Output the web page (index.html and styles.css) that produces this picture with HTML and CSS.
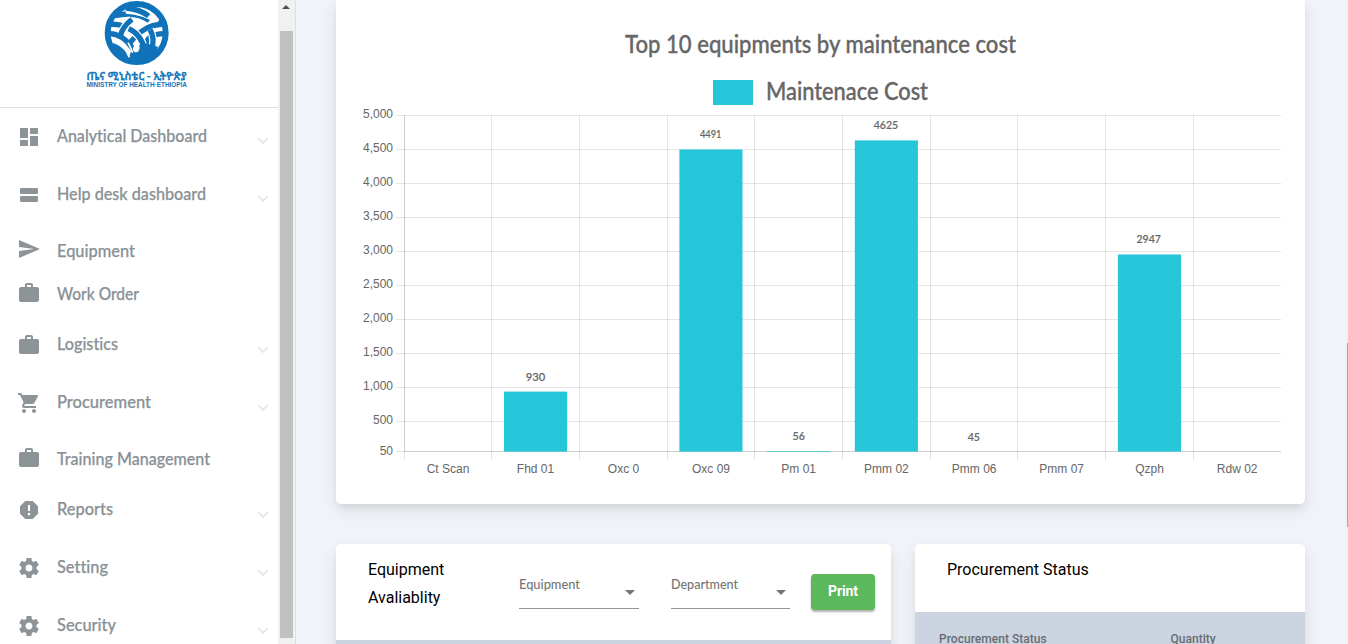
FILE: index.html
```html
<!DOCTYPE html>
<html lang="en">
<head>
<meta charset="utf-8">
<title>Analytical Dashboard</title>
<link rel="stylesheet" href="styles.css">
</head>
<body>
<svg class="sprite" aria-hidden="true">
  <symbol id="dash" viewBox="0 0 24 24"><path d="M3 13h8V3H3v10zm0 8h8v-6H3v6zm10 0h8V11h-8v10zm0-18v6h8V3h-8z"/></symbol>
  <symbol id="agenda" viewBox="0 0 24 24"><rect x="3" y="5" width="18" height="6" rx="1.2"/><rect x="3" y="13" width="18" height="6" rx="1.2"/></symbol>
  <symbol id="send" viewBox="0 0 24 24"><path d="M2.01 21L23 12 2.01 3 2 10l15 2-15 2z"/></symbol>
  <symbol id="work" viewBox="0 0 24 24"><path d="M20 6h-4V4c0-1.11-.89-2-2-2h-4c-1.11 0-2 .89-2 2v2H4c-1.11 0-1.99.89-1.99 2L2 19c0 1.11.89 2 2 2h16c1.11 0 2-.89 2-2V8c0-1.11-.89-2-2-2zm-6 0h-4V4h4v2z"/></symbol>
  <symbol id="cart" viewBox="0 0 24 24"><path d="M7 18c-1.1 0-1.99.9-1.99 2S5.900 22 7 22s2-.9 2-2-.9-2-2-2zM1 2v2h2l3.600 7.590-1.350 2.450c-.16.280-.25.610-.25.960 0 1.100.9 2 2 2h12v-2H7.420c-.14 0-.25-.11-.25-.25l.03-.12.900-1.630h7.450c.75 0 1.410-.41 1.750-1.030l3.580-6.490c.08-.14.12-.31.12-.48 0-.55-.45-1-1-1H5.210l-.94-2H1zm16 16c-1.100 0-1.990.9-1.990 2s.89 2 1.990 2 2-.9 2-2-.9-2-2-2z"/></symbol>
  <symbol id="report" viewBox="0 0 24 24"><path d="M15.730 3H8.270L3 8.270v7.460L8.270 21h7.460L21 15.730V8.270L15.730 3zM12 17.300c-.72 0-1.300-.58-1.300-1.300s.58-1.300 1.300-1.300 1.300.58 1.300 1.300-.58 1.300-1.300 1.300zm1-4.300h-2V7h2v6z"/></symbol>
  <symbol id="gear" viewBox="0 0 24 24"><path d="M19.430 12.980c.04-.32.07-.64.07-.98s-.03-.66-.07-.98l2.110-1.650c.19-.15.24-.42.12-.64l-2-3.460c-.12-.22-.39-.3-.61-.22l-2.490 1c-.52-.4-1.080-.73-1.690-.98l-.38-2.650C14.460 2.180 14.250 2 14 2h-4c-.25 0-.46.18-.49.42l-.38 2.650c-.61.25-1.170.59-1.690.98l-2.490-1c-.23-.09-.49 0-.61.22l-2 3.460c-.13.22-.07.49.12.64l2.110 1.650c-.04.32-.07.65-.07.98s.03.66.07.98l-2.110 1.650c-.19.15-.24.42-.12.64l2 3.460c.12.22.39.3.61.22l2.490-1c.52.4 1.080.73 1.690.98l.38 2.650c.03.24.24.42.49.42h4c.25 0 .46-.18.49-.42l.38-2.650c.61-.25 1.170-.59 1.690-.98l2.490 1c.23.09.49 0 .61-.22l2-3.460c.12-.22.07-.49-.12-.64l-2.110-1.650zM12 15.500c-1.930 0-3.500-1.570-3.500-3.500s1.570-3.500 3.500-3.500 3.500 1.570 3.500 3.500-1.570 3.500-3.500 3.500z"/></symbol>
  <symbol id="chev" viewBox="0 0 12 8"><path d="M1.200 1.200L6 6L10.800 1.200" fill="none" stroke="#e4e7eb" stroke-width="1.900"/></symbol>
</svg>
<div class="app">
  <aside class="sidebar">
    <div class="brand">
      <svg class="logo" viewBox="84 0 110 92">
        <g transform="scale(.33333)">
          <circle cx="410" cy="99" r="88" fill="#fff"/>
          <g class="weave">
            <path class="band" d="M325 74Q352 70 376 80M448 50Q474 56 492 78"/>
            <path class="gap" d="M345 47Q408 32 452 64Q484 86 494 112"/>
            <path class="band" d="M345 47Q408 32 448 62"/>
            <path class="gap" d="M378 30Q436 34 476 62"/>
            <path class="band" d="M378 24Q420 28 446 48"/>
            <path class="gap" d="M360 112Q366 80 396 58"/>
            <path class="band" d="M360 112Q366 80 396 58"/>
            <path class="band" d="M498 72Q455 72 428 92Q405 108 386 134"/>
            <path class="band" d="M498 101Q468 100 450 112Q440 120 434 140"/>
            <path class="gap" d="M386 86Q424 103 434 150"/>
            <path class="band" d="M386 86Q424 103 434 150"/>
            <path class="gap" d="M450 88Q466 116 454 150"/>
            <path class="band" d="M450 88Q466 116 454 150"/>
            <path class="band" d="M324 101Q366 98 400 148"/>
          </g>
          <path fill="#1073b9" d="M328 128Q360 128 388 168L398 142Q398 154 409 155Q421 154 418 134Q430 126 452 134L474 140L462 170L410 190L350 170Z"/>
          <path fill="none" stroke="#fff" stroke-width="5" d="M330 116Q370 126 388 172M384 128Q394 146 398 158"/>
          <path fill="#fff" d="M408 124Q420 141 417 148A9 9 0 0 1 399 147Q400 138 408 124Z"/>
          <circle cx="410" cy="99" r="87" fill="none" stroke="#1073b9" stroke-width="18"/>
        </g>
        <text class="amharic" x="86.500" y="80" textLength="100" lengthAdjust="spacingAndGlyphs">ጤና ሚኒስቴር - ኢትዮጵያ</text>
        <text class="ministry" x="86.500" y="87" textLength="100.500" lengthAdjust="spacingAndGlyphs">MINISTRY OF HEALTH·ETHIOPIA</text>
      </svg>
    </div>
    <nav class="menu">
      <a class="item wide"><svg class="icon"><use href="#dash"/></svg><svg class="label"><text y="18" textLength="150" lengthAdjust="spacingAndGlyphs">Analytical Dashboard</text></svg><svg class="chev"><use href="#chev"/></svg></a>
      <a class="item wide"><svg class="icon"><use href="#agenda"/></svg><svg class="label"><text y="18" textLength="149" lengthAdjust="spacingAndGlyphs">Help desk dashboard</text></svg><svg class="chev"><use href="#chev"/></svg></a>
      <a class="item"><svg class="icon raised"><use href="#send"/></svg><svg class="label"><text y="18" textLength="78" lengthAdjust="spacingAndGlyphs">Equipment</text></svg></a>
      <a class="item last"><svg class="icon"><use href="#work"/></svg><svg class="label"><text y="18" textLength="82" lengthAdjust="spacingAndGlyphs">Work Order</text></svg></a>
      <a class="item wide"><svg class="icon"><use href="#work"/></svg><svg class="label"><text y="18" textLength="61" lengthAdjust="spacingAndGlyphs">Logistics</text></svg><svg class="chev low"><use href="#chev"/></svg></a>
      <a class="item wide"><svg class="icon"><use href="#cart"/></svg><svg class="label"><text y="18" textLength="94" lengthAdjust="spacingAndGlyphs">Procurement</text></svg><svg class="chev low"><use href="#chev"/></svg></a>
      <a class="item last"><svg class="icon"><use href="#work"/></svg><svg class="label"><text y="18" textLength="153" lengthAdjust="spacingAndGlyphs">Training Management</text></svg></a>
      <a class="item wide"><svg class="icon"><use href="#report"/></svg><svg class="label"><text y="18" textLength="56" lengthAdjust="spacingAndGlyphs">Reports</text></svg><svg class="chev low"><use href="#chev"/></svg></a>
      <a class="item wide"><svg class="icon"><use href="#gear"/></svg><svg class="label"><text y="18" textLength="51" lengthAdjust="spacingAndGlyphs">Setting</text></svg><svg class="chev low"><use href="#chev"/></svg></a>
      <a class="item wide"><svg class="icon"><use href="#gear"/></svg><svg class="label"><text y="18" textLength="59" lengthAdjust="spacingAndGlyphs">Security</text></svg><svg class="chev low"><use href="#chev"/></svg></a>
    </nav>
  </aside>
  <div class="scrollbar"><i class="up"></i><i class="thumb"></i></div>
  <main class="main">
    <section class="card chart-card">
      <svg class="chart" viewBox="336 0 969 504">
        <g class="display">
          <text x="625" y="53" textLength="391" lengthAdjust="spacingAndGlyphs">Top 10 equipments by maintenance cost</text>
          <text x="766" y="100" textLength="162" lengthAdjust="spacingAndGlyphs">Maintenace Cost</text>
        </g>
        <rect class="bar" x="713" y="80" width="40" height="25"/>
        <path class="grid" d="M396 115.500H1281M396 149.500H1281M396 183.500H1281M396 217.500H1281M396 251.500H1281M396 285.500H1281M396 319.500H1281M396 353.500H1281M396 387.500H1281M396 421.500H1281M396 451.500H1281"/>
        <path class="grid" d="M404.500 115V460M491.500 115V460M579.500 115V460M667.500 115V460M754.500 115V460M842.500 115V460M930.500 115V460M1017.500 115V460M1105.500 115V460M1193.500 115V460"/>
        <path class="grid" d="M404.500 115V451M404 451.500H1281"/>
        <g class="bar">
          <rect x="504" y="391.600" width="63.100" height="60"/>
          <rect x="679.400" y="149.500" width="63.100" height="302.100"/>
          <rect x="766.800" y="451" width="63.100" height=".6"/>
          <rect x="854.800" y="140.400" width="63.100" height="311.200"/>
          <rect x="1117.900" y="254.500" width="63.100" height="197.100"/>
        </g>
        <g class="axis end">
          <text x="393" y="118">5,000</text><text x="393" y="152">4,500</text><text x="393" y="186">4,000</text><text x="393" y="220">3,500</text><text x="393" y="254">3,000</text><text x="393" y="288">2,500</text><text x="393" y="322">2,000</text><text x="393" y="356">1,500</text><text x="393" y="390">1,000</text><text x="393" y="424">500</text><text x="393" y="455">50</text>
        </g>
        <g class="axis mid">
          <text x="448" y="473">Ct Scan</text><text x="535.500" y="473">Fhd 01</text><text x="623.500" y="473">Oxc 0</text><text x="711" y="473">Oxc 09</text><text x="798.700" y="473">Pm 01</text><text x="886.400" y="473">Pmm 02</text><text x="974.200" y="473">Pmm 06</text><text x="1061.700" y="473">Pmm 07</text><text x="1149.500" y="473">Qzph</text><text x="1237.200" y="473">Rdw 02</text>
        </g>
        <g class="value">
          <text x="525.800" y="381" textLength="19.500" lengthAdjust="spacingAndGlyphs">930</text>
          <text x="700" y="138" textLength="21.500" lengthAdjust="spacingAndGlyphs">4491</text>
          <text x="792.500" y="440" textLength="12.500" lengthAdjust="spacingAndGlyphs">56</text>
          <text x="873.700" y="129" textLength="24.500" lengthAdjust="spacingAndGlyphs">4625</text>
          <text x="967.700" y="441" textLength="12.300" lengthAdjust="spacingAndGlyphs">45</text>
          <text x="1136.500" y="243" textLength="24.500" lengthAdjust="spacingAndGlyphs">2947</text>
        </g>
      </svg>
    </section>
    <div class="row">
      <section class="card equipment">
        <div class="toolbar">
          <h2 class="title narrow">Equipment Avaliablity</h2>
          <div class="select"><svg class="field"><text y="13" textLength="61" lengthAdjust="spacingAndGlyphs">Equipment</text></svg><i class="arrow"></i></div>
          <div class="select second"><svg class="field"><text y="13" textLength="67" lengthAdjust="spacingAndGlyphs">Department</text></svg><i class="arrow"></i></div>
          <button class="print">Print</button>
        </div>
        <div class="thead"></div>
      </section>
      <section class="card procurement">
        <h2 class="title">Procurement Status</h2>
        <div class="thead"><span class="col">Procurement Status</span><span>Quantity</span></div>
      </section>
    </div>
  </main>
  <div class="page-scroll"><i></i></div>
</div>
</body>
</html>
```
FILE: styles.css
```css
* { box-sizing: border-box; }
body { margin: 0; height: 644px; overflow: hidden; background: #f0f4f8; font-family: Roboto, sans-serif; }
svg { display: block; }
text { font-variant-ligatures: none; }
.sprite { display: none; }
.app { display: flex; height: 644px; overflow: hidden; }
.sidebar { width: 278px; flex: none; background: #fff; }
.brand { height: 108px; padding-left: 84px; border-bottom: 1px solid #dfe0e2; }
.logo { width: 110px; height: 92px; }
.weave { fill: none; }
.gap { stroke: #fff; stroke-width: 23px; }
.band { stroke: #1073b9; stroke-width: 16px; }
.amharic { font: 600 11px "Noto Sans Ethiopic", "Noto Sans", "DejaVu Sans", sans-serif; fill: #1073b9; stroke: #1073b9; stroke-width: .3px; }
.ministry { font: 700 6.500px "Liberation Sans", sans-serif; fill: #1073b9; }
.menu { margin-top: -1px; }
.item { display: flex; height: 43px; padding: 15px 0 0 17px; }
.item.wide { height: 58px; padding-top: 18px; }
.item.last { margin-bottom: 6px; }
.icon { width: 24px; height: 24px; fill: #8c9498; flex: none; }
.icon.raised { margin-top: -1px; }
.label { width: 160px; height: 26px; margin: 1px 0 0 16px; overflow: visible; font: 500 18px Lato, sans-serif; fill: #899196; stroke: #899196; stroke-width: .25px; }
.item.wide .label { margin-top: -1px; }
.chev { width: 12px; height: 8px; margin: 12px 0 0 40px; }
.chev.low { margin-top: 13px; }
.scrollbar { width: 18px; flex: none; background: #f1f1f1; border-right: 1px solid #dddfe2; display: flex; flex-direction: column; align-items: center; padding-right: 1px; }
.up { border: 4px solid transparent; border-top: 0; border-bottom: 4px solid #505050; margin-top: 5px; }
.thumb { width: 13px; height: 607px; margin-top: 22px; background: #c1c1c1; }
.main { flex: 1; padding: 0 40px; display: flex; flex-direction: column; gap: 40px; }
.card { background: #fff; border-radius: 5px; box-shadow: 0 8px 17px 2px rgba(0,0,0,.04), 0 3px 24px 2px rgba(0,0,0,.02), 0 5px 8px -2px rgba(0,0,0,.1); }
.chart-card { height: 504px; width: 969px; border-radius: 0 0 5px 5px; flex: none; }
.chart { width: 969px; height: 504px; }
.display { font: 500 24px Lato, sans-serif; fill: #666; stroke: #666; stroke-width: .35px; }
.bar { fill: #26c6da; }
.grid { stroke: rgba(0,0,0,.1); stroke-width: 1; fill: none; }
.axis { font: 12px "Liberation Sans", sans-serif; fill: #666; }
.end { text-anchor: end; }
.mid { text-anchor: middle; }
.value { font: 500 12px Lato, sans-serif; fill: #666; stroke: #666; stroke-width: .2px; }
.row { display: flex; gap: 24px; width: 969px; }
.equipment { width: 555px; flex: none; height: 120px; }
.procurement { width: 390px; height: 120px; }
.title { margin: 0; font-size: 16px; line-height: 28px; font-weight: 400; letter-spacing: 0; color: #000; }
.toolbar { display: flex; height: 96px; padding: 12px 16px 0 32px; }
.title.narrow { width: 120px; margin-right: 31px; }
.select { width: 120px; height: 53px; padding: 20px 4px 0 0; border-bottom: 1px solid #949494; display: flex; justify-content: space-between; }
.second { margin: 0 21px 0 32px; width: 119px; }
.field { width: 80px; height: 20px; overflow: visible; font: 500 13.500px Lato, sans-serif; fill: #757575; }
.arrow { border: 5px solid transparent; border-top-color: #757575; border-bottom: 0; height: 5px; margin-top: 14px; }
.print { width: 64px; height: 36px; margin-top: 18px; border: 0; border-radius: 4px; background: #5cb85c; color: #fff; font: 700 14px Roboto, sans-serif; letter-spacing: -.1px; padding: 0 0 2px; box-shadow: 0 2px 2px rgba(0,0,0,.3); }
.thead { background: #cbd4e0; height: 60px; display: flex; padding: 18px 24px; font-size: 12px; font-weight: 500; line-height: 18px; letter-spacing: .03px; color: #686c72; }
.procurement .title { height: 68px; padding: 12px 0 0 32px; }
.col { width: 231.500px; }
.page-scroll { width: 3px; flex: none; background: #f1f1f1; padding: 343px 0 0 2px; }
.page-scroll i { display: block; width: 1px; height: 184px; background: #a8a8a8; }
```
